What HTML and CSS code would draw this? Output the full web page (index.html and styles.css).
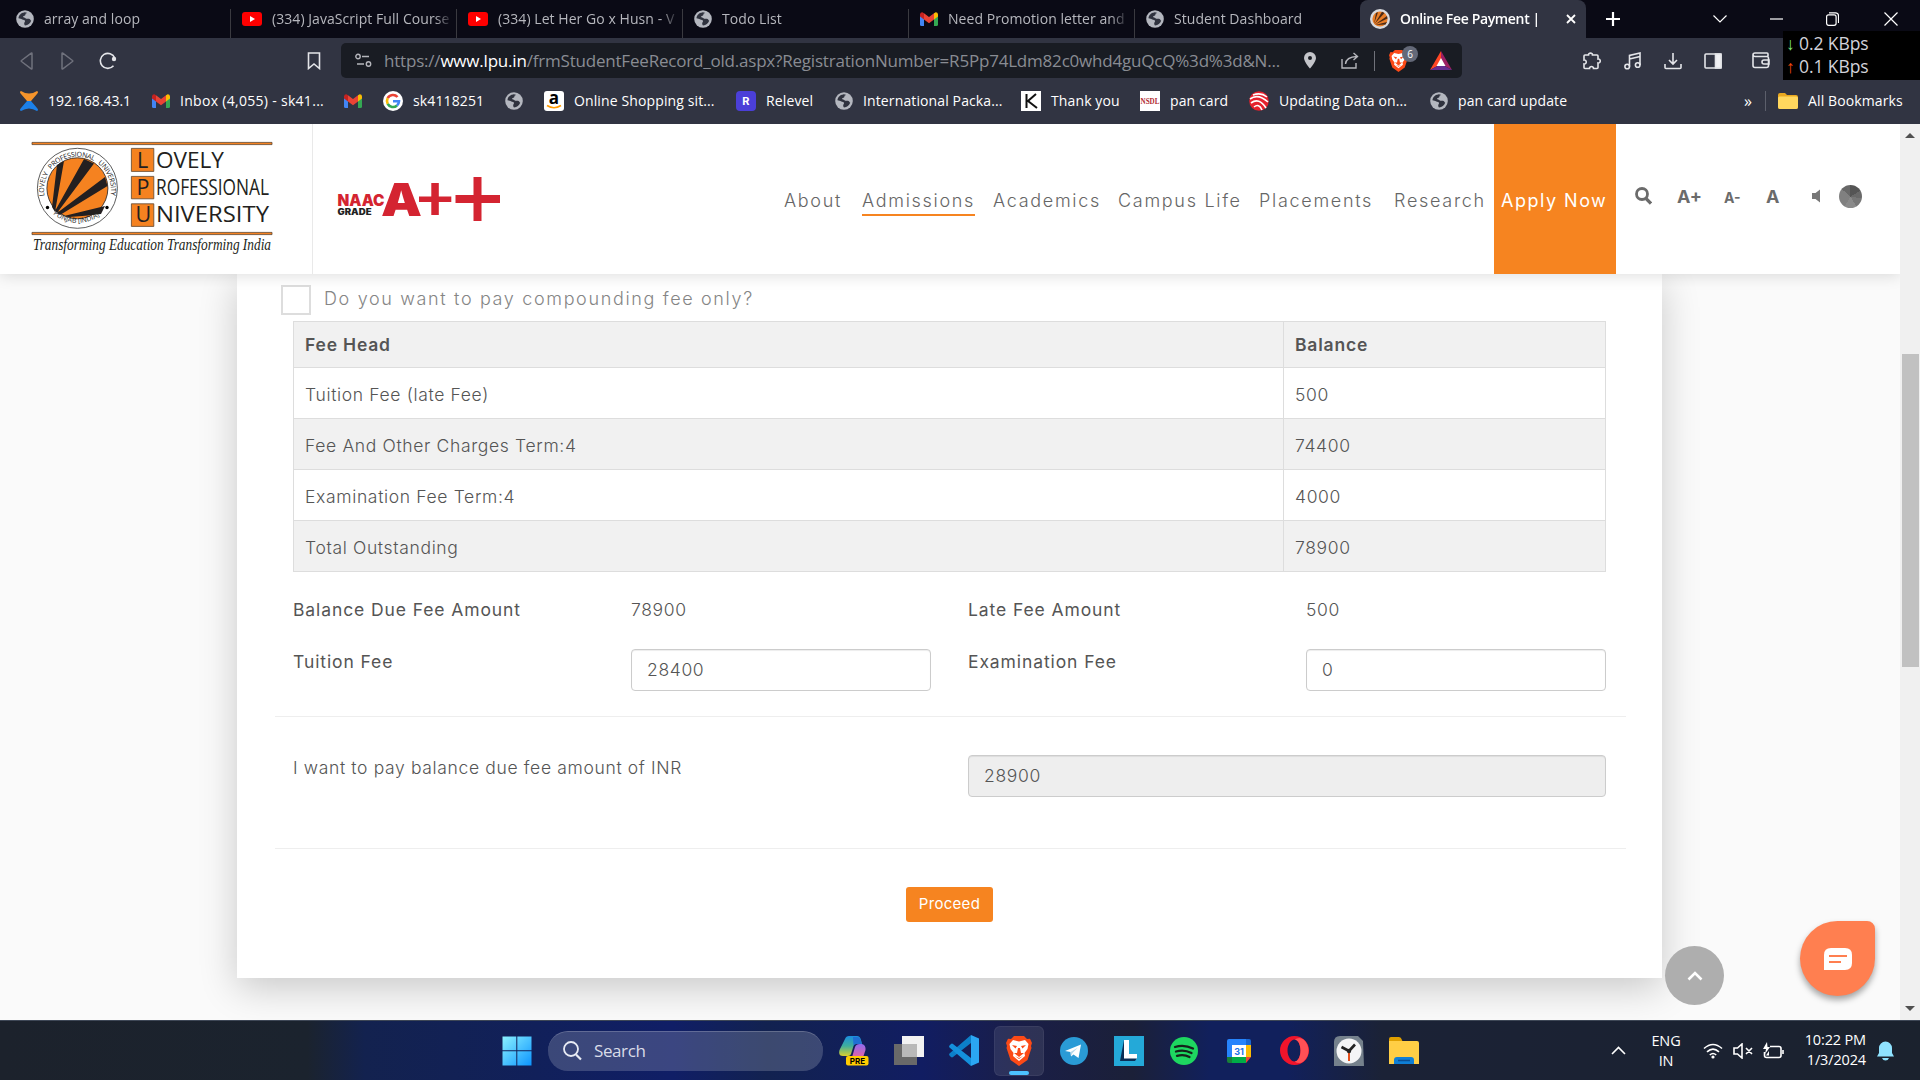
FILE: index.html
```html
<!DOCTYPE html>
<html lang="en">
<head>
<meta charset="utf-8">
<title>Online Fee Payment</title>
<link rel="stylesheet" href="styles.css">
</head>
<body>
<svg class="defs" aria-hidden="true">
  <symbol id="globe" viewBox="0 0 18 18"><circle cx="9" cy="9" r="8.8" fill="#b4b7bf"/><path d="M8.2 2.4C5 2.6 2.6 5.300 2.500 8.300c1.300.5 2.600.4 3.800 1.200 1 .7 2.400.2 2.700 1.200.3 1.200-1 1.600-.8 3 .1.700.3 1.200.8 1.700 3-.2 5.300-2 6.200-4.600-.8-.8-1.100-2-2.400-2.100-1.300-.1-2.300.4-3.300-.5-.8-.8-2.200-.4-2.400-1.400-.1-.9 1.200-.8 1.900-1.300.7-.6.2-1.400.8-2 .4-.4 1-.4 1.400-.6-.8-.4-2-.6-3-.5z" fill="#30333f"/></symbol>
  <symbol id="youtube" viewBox="0 0 20 14"><rect width="20" height="14" rx="3" fill="#f00"/><path d="M8 4v6l5-3z" fill="#fff"/></symbol>
  <symbol id="gmail" viewBox="0 0 18 14"><path d="M0 2v10.500Q0 14 1.500 14H4V5z" fill="#4285f4"/><path d="M18 2v10.500q0 1.500-1.500 1.500H14V5z" fill="#34a853"/><path d="M0 2.200Q.3.200 2.300.300L4 1.200V7.500L0 4.500z" fill="#c5221f"/><path d="M18 2.200Q17.700.2 15.700.3L14 1.200V7.500l4-3z" fill="#fbbc04"/><path d="M4 1.200l5 3.900 5-3.900v6.300l-5 3.800-5-3.800z" fill="#ea4335"/></symbol>
  <symbol id="brave" viewBox="0 0 26 30"><path d="M8 0h10l3 3 3-.2 2 4.200-1 3 .5 2-4 12L13 30 4.500 24l-4-12L1 10 0 7l2-4.200L5 3z" fill="#fb4a17"/><path d="M7 4l6 1.500L19 4l3.500 4-1 5-3 4 .5 3-6 5-6-5 .5-3-3-4-1-5z" fill="#fff"/><path d="M6 9l5 1-1.500 2.500zM20 9l-5 1 1.500 2.500zM12 12h2l1 5h3l-5 4-5-4h3zM9 20l4 2 4-2-4 3z" fill="#fb4a17"/></symbol>
  <symbol id="lpu" viewBox="0 0 20 20"><circle cx="10" cy="10" r="10" fill="#d8dade"/><circle cx="10" cy="10" r="7.600" fill="#e87d27"/><path d="M4 15L6 4l2-.8zM4.500 15L12 2.800l2.500 1.200zM5 15.500L17 7l.5 2.500zM5 16l12-3-1.500 2.500z" fill="#4a2a16"/></symbol>
</svg>

<div class="tabs">
  <div class="tab"><svg class="i18"><use href="#globe"/></svg><span>array and loop</span></div>
  <div class="tab"><svg class="yt"><use href="#youtube"/></svg><span>(334) JavaScript Full Course</span></div>
  <div class="tab"><svg class="yt"><use href="#youtube"/></svg><span>(334) Let Her Go x Husn - V</span></div>
  <div class="tab"><svg class="i18"><use href="#globe"/></svg><span>Todo List</span></div>
  <div class="tab"><svg class="gm"><use href="#gmail"/></svg><span>Need Promotion letter and</span></div>
  <div class="tab last"><svg class="i18"><use href="#globe"/></svg><span>Student Dashboard</span></div>
  <div class="tab active"><svg class="i20"><use href="#lpu"/></svg><span>Online Fee Payment |</span><svg class="close" viewBox="0 0 10 10"><path d="M1 1l8 8M9 1L1 9"/></svg></div>
  <div class="window-buttons">
    <svg width="14" height="14" viewBox="0 0 14 14" class="thick"><path d="M7 0v14M0 7h14"/></svg>
    <svg width="14" height="8" viewBox="0 0 14 8"><path d="M.5.5L7 7 13.500.5"/></svg>
    <svg width="13" height="14" viewBox="0 0 13 14"><path d="M0 7h13"/></svg>
    <svg width="13" height="14" viewBox="0 0 13 14"><rect x=".6" y="2.800" width="9.500" height="10.500" rx="2"/><path d="M3 .8h6.500q3 0 3 3V11"/></svg>
    <svg width="14" height="14" viewBox="0 0 14 14"><path d="M.5.500l13 13M13.500.5l-13 13"/></svg>
  </div>
</div>

<div class="toolbar">
  <svg class="dim" width="14" height="18" viewBox="0 0 14 18"><path d="M12 1.500v15q0 .8-.8.3L1.500 9.500q-.7-.5 0-1L11.200 1.200q.8-.5.800.3z"/></svg>
  <svg class="dim" width="14" height="18" viewBox="0 0 14 18"><path d="M2 1.500v15q0 .8.800.3l9.700-7.300q.7-.5 0-1L2.800 1.200q-.8-.5-.8.3z"/></svg>
  <svg width="18" height="18" viewBox="0 0 18 18"><path d="M14.500 13.800A7.500 7.500 0 1 1 15.800 6"/><circle cx="15" cy="7" r="2.200" fill="#e4e5e9" stroke="none"/></svg>
  <svg width="14" height="18" viewBox="0 0 14 18"><path d="M1.500 1h11v15.500L7 12l-5.500 4.500z"/></svg>
  <div class="address">
    <svg width="17" height="15" viewBox="0 0 17 15"><circle cx="3" cy="3.500" r="2.200"/><path d="M7 3.500h7M2 11h7"/><circle cx="13.500" cy="11" r="2.200"/></svg>
    <span class="url">https://<b>www.lpu.in</b>/frmStudentFeeRecord_old.aspx?RegistrationNumber=R5Pp74Ldm82c0whd4guQcQ%3d%3d&amp;N...</span>
    <svg width="12" height="17" viewBox="0 0 12 17"><path d="M6 0a6 6 0 0 1 6 6c0 4-6 10.500-6 10.500S0 10 0 6a6 6 0 0 1 6-6zm0 4a2 2 0 1 0 0 4 2 2 0 0 0 0-4z" fill="#c4c5ca" stroke="none"/></svg>
    <svg width="18" height="17" viewBox="0 0 18 17"><path d="M1 7v9h14v-5M4.500 12Q5 5 16 4.500M12.500 1l4 3.500-4 3.500"/></svg>
    <i class="rule"></i>
    <span class="shield"><svg width="19" height="22"><use href="#brave"/></svg><em>6</em></span>
    <svg width="22" height="19" viewBox="0 0 22 19" class="plain"><path d="M11 0L0 19l11-6z" fill="#ff4724"/><path d="M11 0l11 19-11-6z" fill="#9e1f63"/><path d="M0 19h22l-11-6z" fill="#662d91"/><path d="M11 7l4.500 8h-9z" fill="#fff"/></svg>
  </div>
  <svg class="ext" width="18" height="18" viewBox="0 0 18 18"><path d="M2 3h3.500C5.200.5 9.800.5 9.500 3H14q1 0 1 1v3c3-.4 3 4.400 0 4v4.500q0 1-1 1h-3.500c.3-2.600-4.300-2.600-4 0H2q-1 0-1-1V12c3 .3 3-4.300 0-4V4q0-1 1-1z"/></svg>
  <svg width="18" height="18" viewBox="0 0 18 18"><circle cx="3.200" cy="14.500" r="2.300"/><circle cx="13.700" cy="13" r="2.300"/><path d="M5.500 14.500V3.500L16 1v12M5.500 7L16 4.500"/></svg>
  <svg width="18" height="18" viewBox="0 0 18 18"><path d="M9 1v11M5 8l4 4 4-4M1 12v3.500q0 1 1 1h14q1 0 1-1V12"/></svg>
  <svg width="18" height="16" viewBox="0 0 18 16"><rect x="1" y="1" width="16" height="14" rx="1"/><path d="M11.500 1H17v14h-5.500z" fill="#f1f1f4"/></svg>
  <svg class="wallet" width="18" height="17" viewBox="0 0 18 17"><path d="M16 4V2q0-1-1-1H3Q1 1 1 3v10.500q0 2 2 2h11.500q2 0 2-2V6q0-1.500-1.500-1.500H3Q1.500 4.500 1 3M17 8h-5q-2 0-2 2t2 2h5z"/></svg>
</div>
<div class="net"><span><i class="down">↓</i> 0.2 KBps</span><span><i class="up">↑</i> 0.1 KBps</span></div>

<div class="bookmarks">
  <div><svg width="18" height="20" viewBox="0 0 18 20"><path d="M1 0q8 5 16 0 2 1 0 3l-6 7H7L1 3q-2-2 0-3z" fill="#f5942b"/><path d="M1 20q8-5 16 0 2-1 0-3l-6-7H7l-6 7q-2 2 0 3z" fill="#1c80e8"/></svg>192.168.43.1</div>
  <div><svg class="gm"><use href="#gmail"/></svg>Inbox (4,055) - sk41...</div>
  <div><svg class="gm"><use href="#gmail"/></svg></div>
  <div><svg width="20" height="20" viewBox="0 0 20 20"><circle cx="10" cy="10" r="10" fill="#fff"/><g fill="none" stroke-width="2.600"><path d="M14.500 6A6 6 0 0 0 4.700 7.200" stroke="#ea4335"/><path d="M4.700 7.200a6 6 0 0 0 0 5.600" stroke="#fbbc05"/><path d="M4.700 12.800a6 6 0 0 0 9.300 1.700" stroke="#34a853"/><path d="M14 14.500a6 6 0 0 0 2-4.300h-6" stroke="#4285f4"/></g></svg>sk4118251</div>
  <div><svg class="i18"><use href="#globe"/></svg></div>
  <div><svg width="20" height="20" viewBox="0 0 20 20"><rect width="20" height="20" rx="3" fill="#fff"/><text x="10" y="13" text-anchor="middle" class="amazon">a</text><path d="M3 14.500q7 4.500 14 0" fill="none" stroke="#f90" stroke-width="1.600"/></svg>Online Shopping sit...</div>
  <div><svg width="20" height="20" viewBox="0 0 20 20"><rect width="20" height="20" rx="4" fill="#4b3fd8"/><text x="10" y="14" text-anchor="middle" class="letter">R</text></svg>Relevel</div>
  <div><svg class="i18"><use href="#globe"/></svg>International Packa...</div>
  <div><svg width="20" height="20" viewBox="0 0 20 20"><path d="M0 0h20v20H0z" fill="#fff"/><path d="M5.500 3v14M15 3l-8 7 9 7" fill="none" stroke="#111" stroke-width="2"/></svg>Thank you</div>
  <div><svg width="20" height="20" viewBox="0 0 20 20"><path d="M0 0h20v20H0z" fill="#fff"/><text x=".5" y="13" textLength="19" lengthAdjust="spacingAndGlyphs" class="nsdl">NSDL</text></svg>pan card</div>
  <div><svg width="20" height="20" viewBox="0 0 20 20"><circle cx="10" cy="10" r="9.800" fill="#e5212d"/><path d="M1 8q8-6 18 3M2 12q8-6 15 5M5 16q5-4 8 3M4 4q8-3 14 2" fill="none" stroke="#fff" stroke-width="1.600"/></svg>Updating Data on...</div>
  <div><svg class="i18"><use href="#globe"/></svg>pan card update</div>
  <div class="more">»</div>
  <div class="all"><svg width="20" height="16" viewBox="0 0 20 16"><path d="M0 2q0-2 2-2h5l2 2h9q2 0 2 2v10q0 2-2 2H2q-2 0-2-2z" fill="#e9a820"/><path d="M0 5q0-1.500 1.500-1.500h17Q20 3.500 20 5v9q0 2-2 2H2q-2 0-2-2z" fill="#ffd75e"/></svg>All Bookmarks</div>
</div>

<div class="viewport">
  <div class="page">
    <header class="site-header">
      <div class="brand">
        <svg width="242" height="120" viewBox="31 138 242 120">
          <g fill="#f58220" stroke="#5e452e" stroke-width=".8"><path d="M32 142.400h240v2.200H32zM32 232.400h240v2.200H32z"/><path d="M131.400 148.400h22.400v23h-22.400zM131.400 176.400h22.400v22.400h-22.400zM131.400 203.800h22.400v22.600h-22.400z"/></g>
          <circle cx="77.400" cy="188.300" r="40" fill="#fff" stroke="#333" stroke-width=".8"/>
          <circle cx="77.400" cy="188.300" r="30.500" fill="#f58220" stroke="#231f20" stroke-width=".8"/>
          <path d="M52 207L57 165l7-4L55 212zM55 211L84 159l10 4.500L57 213zM57 213l48-36 2.500 9L60 215zM64 216l41-10-4 8q-15 2-32 3z" fill="#231f20"/>
          <circle cx="47.500" cy="207.500" r="1.700"/><circle cx="107" cy="207.500" r="1.700"/>
          <path id="ring-top" d="M44.500 196A33.500 33.500 0 1 1 110.500 196" fill="none"/>
          <path id="ring-bottom" d="M53 214A38 38 0 0 0 103 213" fill="none"/>
          <text class="ring"><textPath href="#ring-top" textLength="116">LOVELY &#160; PROFESSIONAL &#160; UNIVERSITY</textPath></text>
          <text class="ring"><textPath href="#ring-bottom" textLength="50">PUNJAB [INDIA]</textPath></text>
          <g class="wordmark"><text x="137" y="167.500">L</text><text x="136.500" y="195">P</text><text x="135.500" y="222">U</text>
          <text x="156" y="167.500" textLength="68" lengthAdjust="spacingAndGlyphs">OVELY</text>
          <text x="156" y="195" textLength="113" lengthAdjust="spacingAndGlyphs">ROFESSIONAL</text>
          <text x="156" y="222" textLength="113" lengthAdjust="spacingAndGlyphs">NIVERSITY</text></g>
          <text class="tagline" x="33" y="250" textLength="238" lengthAdjust="spacingAndGlyphs">Transforming Education Transforming India</text>
        </svg>
      </div>
      <svg class="naac" width="164" height="50" viewBox="337 174 164 50">
        <text x="337.500" y="206" textLength="47" lengthAdjust="spacingAndGlyphs" class="naac-word">NAAC</text>
        <text x="337.500" y="214.800" textLength="34" lengthAdjust="spacingAndGlyphs" class="naac-grade">GRADE</text>
        <text x="381" y="216" textLength="41" lengthAdjust="spacingAndGlyphs" class="naac-a">A</text>
        <path d="M419 196.500h12.300V183h7.500v13.500h12.500v5.500h-12.500v13h-7.500v-13H419zM455.500 195h18v-18h8v18H500v8h-18.500v18h-8v-18h-18z" fill="#d42431"/>
      </svg>
      <nav>
        <a>About</a><a class="current">Admissions</a><a>Academics</a><a>Campus Life</a><a>Placements</a><a>Research</a><a class="apply">Apply Now</a>
      </nav>
      <div class="tools">
        <svg width="17" height="18" viewBox="0 0 17 18"><circle cx="7" cy="7" r="5.500" fill="none" stroke="#6b6b6b" stroke-width="2.800"/><path d="M11 11.500l5 5" stroke="#6b6b6b" stroke-width="3.200"/></svg>
        <b>A+</b><b class="small">A-</b><b>A</b>
        <svg width="9" height="14" viewBox="0 0 9 14"><path d="M0 4h3.500L8 .5v13L3.500 10H0z" fill="#777"/></svg>
        <i class="contrast"></i>
      </div>
    </header>
    <main>
      <section class="card">
        <label class="check"><i></i><span>Do you want to pay compounding fee only?</span></label>
        <table>
          <tr><th>Fee Head</th><th>Balance</th></tr>
          <tr><td>Tuition Fee (late Fee)</td><td>500</td></tr>
          <tr><td>Fee And Other Charges Term:4</td><td>74400</td></tr>
          <tr><td>Examination Fee Term:4</td><td>4000</td></tr>
          <tr><td>Total Outstanding</td><td>78900</td></tr>
        </table>
        <div class="grid">
          <span class="strong">Balance Due Fee Amount</span><span>78900</span><span class="strong">Late Fee Amount</span><span>500</span>
          <span class="strong">Tuition Fee</span><div class="field">28400</div><span class="strong">Examination Fee</span><div class="field">0</div>
        </div>
        <hr>
        <div class="pay"><span>I want to pay balance due fee amount of INR</span><div class="field readonly">28900</div></div>
        <hr>
        <div class="actions"><button>Proceed</button></div>
      </section>
    </main>
    <div class="to-top"><svg width="16" height="10" viewBox="0 0 16 10"><path d="M1.500 8.500L8 2l6.500 6.500" fill="none" stroke="#fff" stroke-width="2.600"/></svg></div>
    <div class="chat"><svg width="28" height="22" viewBox="0 0 28 22"><path d="M7 0h14q7 0 7 7v8q0 7-7 7H0V7q0-7 7-7z" fill="#fff"/><path d="M5 8h18M5 14h12" stroke="#ff7f50" stroke-width="2"/></svg></div>
  </div>
  <div class="scrollbar"><i class="arrow-up"></i><i class="thumb"></i><i class="arrow-down"></i></div>
</div>

<footer class="taskbar">
  <svg class="start" width="30" height="30" viewBox="0 0 30 30"><defs><linearGradient id="win" x1="0" y1="0" x2="30" y2="30" gradientUnits="userSpaceOnUse"><stop stop-color="#8df3ff"/><stop offset="1" stop-color="#0a93ff"/></linearGradient></defs><path d="M.5.500h13.800v13.800H.5zM15.300.5h14.200v13.800H15.300zM.5 15.300h13.800v14.200H.5zM15.300 15.300h14.200v14.200H15.300z" fill="url(#win)"/></svg>
  <div class="search"><svg width="19" height="20" viewBox="0 0 19 20"><circle cx="8" cy="8" r="7" fill="none" stroke="#e8ebf4" stroke-width="1.800"/><path d="M13 13.500l5 5" stroke="#e8ebf4" stroke-width="2.200"/></svg><span>Search</span></div>
  <div class="apps">
    <span><svg width="30" height="30" viewBox="0 0 30 30"><defs><linearGradient id="cp-left" x1="0" y1="0" x2="0" y2="1"><stop stop-color="#1b8ee0"/><stop offset=".5" stop-color="#3fae9c"/><stop offset="1" stop-color="#d9cf2f"/></linearGradient><linearGradient id="cp-right" x1="0" y1="0" x2="0" y2="1"><stop stop-color="#8d6bf0"/><stop offset="1" stop-color="#f0609a"/></linearGradient></defs><path d="M6 3q1-3 4-3h8q3 0 4 4l1 4h-6q-2 0-2.500 2L12 18q-.6 2-3 2H4q-5 0-3.500-6z" fill="url(#cp-left)"/><path d="M14 1h4q3 0 4 4l1 3h-6q-2 0-2.500 2z" fill="#1f6fd4"/><path d="M21 8h2q4 1 3.500 6l-2 6q-1 3-4 3h-8l3.500-12q1-3 5-3z" fill="url(#cp-right)"/><rect x="7" y="20" width="22.500" height="9.500" rx="2" fill="#fc0"/><text x="18.500" y="28" text-anchor="middle" class="pre">PRE</text></svg></span>
    <span><svg width="30" height="30" viewBox="0 0 30 30"><path d="M0 8h23v21H0z" fill="#696969"/><path d="M8 0h22v21H8z" fill="#f2f2f2"/><path d="M8 8h15v13H8z" fill="#b9b9b9"/></svg></span>
    <span><svg width="30" height="31" viewBox="0 0 30 31"><path d="M22 0v8L4 22q-1 .8-2 0l-1.500-1.500q-.8-1 0-2z" fill="#0c7fc9"/><path d="M22 31v-8L4 9Q3 8.200 2 9L.5 10.500q-.8 1 0 2z" fill="#1490dc"/><path d="M22 0l8 3.500v24L22 31z" fill="#2ba6f3"/></svg></span>
    <span class="running"><svg width="26" height="30"><use href="#brave"/></svg></span>
    <span><svg width="28" height="28" viewBox="0 0 28 28"><circle cx="14" cy="14" r="14" fill="#2a9bd6"/><path d="M5 14L21 7.500l-2.500 13.500-5-3.500-2.500 2-.5-4.500z" fill="#fff"/><path d="M10.500 15L18 10.500 12.500 16l-1.500 3z" fill="#b9d9ea"/></svg></span>
    <span><svg width="30" height="30" viewBox="0 0 30 30"><path d="M0 0h30v30H0z" fill="#24a9d8"/><path d="M10 4L6 25h15l2-3H10z" fill="#0a2f56"/><path d="M10 4h5v14h8v4.500H10z" fill="#fff"/></svg></span>
    <span><svg width="28" height="28" viewBox="0 0 28 28"><circle cx="14" cy="14" r="14" fill="#1ed760"/><path d="M5 10q9-3 18 1.500M6 14.500q8-2.500 15.500 1.500M7 18.800q7-2 12.500 1.200" fill="none" stroke="#15231b" stroke-width="2.300" stroke-linecap="round"/></svg></span>
    <span><svg width="24" height="24" viewBox="0 0 24 24"><path d="M2 0h17v6H5v13H0V2q0-2 2-2z" fill="#2684fc"/><path d="M19 0h3q2 0 2 2v4h-5z" fill="#1967d2"/><path d="M5 6h14v13H5z" fill="#fff"/><path d="M19 6h5v12h-5z" fill="#fbbc04"/><path d="M5 18h14v6H5z" fill="#00ac47"/><path d="M0 18h5v6H2q-2 0-2-2z" fill="#188038"/><path d="M19 18h5l-5 6z" fill="#ea4335"/><text x="12" y="16" text-anchor="middle" class="day">31</text></svg></span>
    <span><svg width="29" height="29" viewBox="0 0 29 29"><path d="M14.500 0a14.500 14.500 0 1 0 0 29 14.500 14.500 0 0 0 0-29zm0 3.500c3.500 0 6 5 6 11s-2.500 11-6 11-7-5-7-11 3.500-11 7-11z" fill="#f0142b" fill-rule="evenodd"/><path d="M14.500 3.500q5-3 9 0a14.500 14.500 0 0 1 0 22q-4 3-9 0c3.500 0 6-5 6-11s-2.500-11-6-11z" fill="#ff5055"/></svg></span>
    <span><svg width="30" height="30" viewBox="0 0 30 30"><path d="M6 0h18l5 5 1 25H0V6q0-6 6-6z" fill="#75818c"/><circle cx="15" cy="15" r="12.500" fill="#f4f5f6"/><path d="M15 15L7.500 11M15 15l6-6.500" stroke="#222" stroke-width="2.600"/><path d="M15 15v10" stroke="#e4501c" stroke-width="2"/><circle cx="15" cy="15" r="2.200" fill="#222"/></svg></span>
    <span><svg width="30" height="27" viewBox="0 0 30 27"><path d="M0 2q0-2 2-2h8q2 0 3 3l1 3H0z" fill="#e0a000"/><path d="M0 4h28q2 0 2 2v21H0z" fill="#ffce45"/><path d="M5 27v-4q0-3 3-3h14q3 0 3 3v4z" fill="#0f7fd6"/><path d="M9 23.500h12" stroke="#0a4f94" stroke-width="1.500"/></svg></span>
  </div>
  <div class="tray">
    <svg width="15" height="9" viewBox="0 0 15 9"><path d="M1 8l6.500-6.500L14 8"/></svg>
    <div class="lang">ENG<br>IN</div>
    <svg width="20" height="16" viewBox="0 0 20 16"><path d="M1 5.500q9-8 18 0M4 8.800q6-5.500 12 0M6.800 12q3.200-3 6.400 0"/><circle cx="10" cy="14" r="1.600" fill="#fff" stroke="none"/></svg>
    <svg width="20" height="16" viewBox="0 0 20 16"><path d="M1 5v6h3.500L9 15V1L4.500 5zM13 5l6 6M19 5l-6 6"/></svg>
    <svg width="21" height="18" viewBox="0 0 21 18"><path d="M7 4.500h9q2 0 2 2v7q0 2-2 2H3.500q-2 0-2-2V10M20 8v4"/><path d="M4 0L0 7h3l-1 5 5-7H4.500z" fill="#fff" stroke="none"/><path d="M3 13.500h3V9z" fill="#fff" stroke="none"/></svg>
    <div class="clock">10:22 PM<br>1/3/2024</div>
    <svg width="17" height="20" viewBox="0 0 17 20"><path d="M0 15.500l2-3.500V7a6.500 6.500 0 0 1 13 0v5l2 3.500zM5 17h7q-1 2.500-3.500 2.500T5 17z" fill="#8fe3ff" stroke="none"/></svg>
  </div>
</footer>
</body>
</html>
```
FILE: styles.css
```css
* { box-sizing: border-box; }
body { margin: 0; width: 1920px; height: 1080px; overflow: hidden; position: relative; display: flex; flex-direction: column; font-family: "Open Sans", "Noto Sans", sans-serif; }
svg { display: block; flex: none; }
.defs { position: absolute; width: 0; height: 0; }
i, em { font-style: normal; }
.i18 { width: 18px; height: 18px; }
.i20 { width: 20px; height: 20px; }
.yt { width: 20px; height: 14px; }
.gm { width: 18px; height: 14px; }

/* Browser tabs */
.tabs { height: 38px; flex: none; background: #0a0a15; display: flex; padding-left: 5px; color: #b6b7bd; font-size: 14px; letter-spacing: .06px; }
.tab { width: 226px; height: 38px; flex: none; display: flex; align-items: center; padding-left: 11px; position: relative; }
.tab span { margin: -2px 0 0 10px; width: 181px; white-space: nowrap; overflow: hidden; -webkit-mask-image: linear-gradient(90deg, #000 90%, transparent); mask-image: linear-gradient(90deg, #000 90%, transparent); }
.tab::after { content: ""; position: absolute; right: 0; top: 9px; width: 1px; height: 29px; background: #3a3a40; }
.tab.last::after, .tab.active::after { display: none; }
.tab.active { background: #313442; color: #fff; font-weight: 600; border-radius: 8px 8px 0 0; margin-left: -1px; padding-left: 10px; }
.tab.active span { width: 152px; letter-spacing: -.35px; }
.close { width: 10px; height: 10px; margin-left: 14px; fill: none; stroke: #fff; stroke-width: 1.800; }
.window-buttons { display: grid; grid-template-columns: 107px 57px 56px 58px 20px; align-items: center; padding-left: 20px; }
.window-buttons svg { fill: none; stroke: #fff; stroke-width: 1.200; }
.window-buttons .thick { stroke-width: 2.200; }

/* Toolbar */
.toolbar { height: 45px; flex: none; background: #313442; display: grid; grid-template-columns: 40px 39px 208px 34px 1242px 41px 40px 40px 48px 20px; align-items: center; padding-left: 20px; }
.toolbar svg { fill: none; stroke: #e4e5e9; stroke-width: 1.600; }
.toolbar .dim { stroke: #6f717c; stroke-width: 1.500; }
.toolbar .plain { stroke: none; }
.address { width: 1121px; height: 35px; background: #191c23; border-radius: 5px; display: grid; grid-template-columns: 29px 920px 37px 33px 15px 41px 22px; align-items: center; padding-left: 14px; }
.address svg { stroke: #b5b6bc; stroke-width: 1.400; }
.url { font-size: 17px; letter-spacing: -.2px; color: #898c93; white-space: nowrap; }
.url b { color: #fff; font-weight: 400; }
.rule { width: 1px; height: 20px; background: #70727a; }
.shield { position: relative; }
.shield svg { stroke: none; }
.shield em { position: absolute; left: 13px; top: -4px; width: 16px; height: 16px; border-radius: 8px; background: #646978; color: #fff; font-size: 10px; line-height: 16px; text-align: center; }
.net { position: absolute; left: 1783px; top: 31px; width: 137px; height: 49px; background: #000; color: #d2d2da; font-size: 17.500px; letter-spacing: -.1px; line-height: 23px; padding: 1px 3px; display: flex; flex-direction: column; white-space: nowrap; }
.down { color: #83e77a; }
.up { color: #f5480c; }

/* Bookmarks bar */
.bookmarks { height: 41px; flex: none; background: #313442; display: grid; grid-template-columns: 132px 192px 39px 122px 39px 192px 99px 186px 119px 109px 181px 314px 21px 150px; align-items: center; padding: 0 0 5px 20px; color: #fff; font-size: 14px; line-height: 20px; letter-spacing: .12px; white-space: nowrap; }
.bookmarks > div { display: flex; align-items: center; gap: 10px; }
.bookmarks > div:nth-child(2) { letter-spacing: .3px; }
.bookmarks > div:first-child { letter-spacing: 0; }
.bookmarks .all { border-left: 1px solid #5c5f6b; padding-left: 12px; height: 20px; }
.more { font-size: 16px; }
.amazon { font: bold 17px "Open Sans", sans-serif; }
.letter { font: bold 11px Inter, sans-serif; fill: #fff; }
.nsdl { font: bold 9px "Liberation Serif", serif; fill: #b12a34; letter-spacing: 0; }

/* Web page */
.viewport { height: 896px; flex: none; display: flex; font-family: Inter, sans-serif; color: #555; background: #fafafa; }
.page { width: 1900px; position: relative; overflow: hidden; }
.site-header { height: 150px; background: #fff; display: flex; position: relative; z-index: 2; box-shadow: 0 2px 14px rgba(0,0,0,.13); }
.brand { width: 313px; border-right: 1px solid #e9e9e9; padding: 14px 0 0 31px; }
.naac { margin: 50px 283px 0 24px; }
.ring { font: 7px "Open Sans", sans-serif; fill: #222; }
.wordmark { font: 21.500px "Open Sans", sans-serif; fill: #231f20; }
.tagline { font: italic 16px "Liberation Serif", serif; fill: #231f20; }
.naac-word { font: 900 15.500px Inter, sans-serif; fill: #d42431; }
.naac-grade { font: 900 8.500px Inter, sans-serif; fill: #222; }
.naac-a { font: 900 46px Inter, sans-serif; fill: #d42431; }
nav { display: grid; grid-template-columns: 78px 131px 125px 141px 135px 100px 122px; font-size: 18px; font-weight: 300; letter-spacing: 1.700px; color: #666; }
nav a { white-space: nowrap; justify-self: start; height: 30px; margin-top: 62px; line-height: 29px; }
nav .current { border-bottom: 2px solid #f68420; }
nav .apply { background: #f68420; color: #fff; font-weight: 400; width: 122px; height: 150px; margin: 0; line-height: 153px; padding-left: 7px; letter-spacing: 1.500px; }
.tools { display: grid; grid-template-columns: 42px 47px 42px 46px 27px 23px; align-items: center; align-self: flex-start; margin: 59px 0 0 19px; height: 26px; color: #6b6b6b; font-size: 18px; }
.tools .small { font-size: 14px; padding-top: 3px; }
.contrast { width: 23px; height: 23px; border-radius: 50%; background: conic-gradient(#555 0 60deg, #696969 60deg 100deg, #777 100deg 150deg, #8a8a8a 150deg 210deg, #808080 210deg 310deg, #686868 310deg); }

.card { width: 1425px; height: 704px; margin-left: 237px; background: #fff; box-shadow: 0 10px 36px rgba(0,0,0,.2); padding: 11px 36px 0 38px; font-size: 17.500px; font-weight: 300; letter-spacing: .65px; }
.check { display: flex; height: 30px; padding-left: 6px; font-size: 18px; letter-spacing: 1.650px; color: #858585; line-height: 28px; }
.check i { width: 30px; height: 30px; border: 2px solid #ddd; margin-right: 13px; }
table { border-collapse: collapse; width: 1313px; table-layout: fixed; margin: 6px 0 0 18px; }
th, td { border: 1px solid #ddd; text-align: left; height: 51px; padding: 2px 11px 0; }
th { height: 46px; letter-spacing: .8px; font-weight: 600; padding-top: 0; }
th:first-child { width: 990px; }
tr:nth-child(odd) { background: #f1f1f1; }
.grid { display: grid; grid-template-columns: 338px 337px 338px 300px; grid-template-rows: 50px 67px; padding: 27px 0 0 18px; line-height: 22px; }
.strong { font-weight: 400; letter-spacing: .9px; }
.field { width: 300px; height: 42px; border: 1px solid #ccc; border-radius: 4px; padding: 0 15px; line-height: 40px; box-shadow: inset 0 1px 1px rgba(0,0,0,.075); }
.grid .strong:nth-child(5), .grid .strong:nth-child(7) { padding-top: 2px; }
.card hr { border: 0; border-top: 1px solid #eee; margin: 0; height: 1px; }
.pay { height: 131px; display: flex; padding: 38px 0 0 18px; }
.pay span { width: 675px; line-height: 26px; }
.readonly { width: 638px; background: #eee; }
.actions { display: flex; justify-content: center; padding: 38px 2px 0 0; }
.actions button { width: 87px; height: 35px; border: 0; border-radius: 3px; background: #f68420; color: #fff; font: 15px Inter, sans-serif; letter-spacing: .3px; padding: 0 0 2px; }
.to-top { position: absolute; left: 1665px; top: 822px; width: 59px; height: 59px; border-radius: 50%; background: #aeaeae; display: flex; align-items: center; justify-content: center; }
.chat { position: absolute; left: 1800px; top: 797px; width: 75px; height: 75px; border-radius: 38px 8px 38px 38px; background: #ff7f50; box-shadow: 0 4px 6px rgba(0,0,0,.35); display: flex; align-items: center; justify-content: center; }
.scrollbar { width: 20px; background: #f0f0f0; display: flex; flex-direction: column; align-items: center; }
.arrow-up { margin: 9px 0 216px; border: 5px solid transparent; border-top: 0; border-bottom-color: #505050; }
.thumb { width: 17px; height: 313px; background: #c1c1c1; }
.arrow-down { margin-top: 339px; border: 5px solid transparent; border-bottom: 0; border-top-color: #505050; }

/* Taskbar */
.taskbar { height: 60px; flex: none; border-top: 1px solid #3e4756; display: flex; align-items: center; padding-left: 502px; color: #fff; background: linear-gradient(90deg, #1c222c, #1b232e 16%, #13224f 19%, #11205a 28%, #101e66 35%, #122250 40%, #111d62 48%, #1a1e48 53%, #1b2038 59%, #11205c 63%, #11205c 67%, #1b2236 72%, #1b222e); }
.search { width: 275px; height: 40px; margin-left: 16px; border-radius: 20px; background: rgba(255,255,255,.18); border-top: 1px solid rgba(255,255,255,.2); display: flex; align-items: center; gap: 12px; padding-left: 15px; color: #d9dce8; font-size: 17px; letter-spacing: -.4px; }
.search span { margin-top: -2px; }
.apps { display: flex; gap: 5px; margin-left: 6px; }
.apps span { width: 50px; height: 50px; display: flex; align-items: center; justify-content: center; }
.apps .running { position: relative; background: rgba(255,255,255,.09); border-radius: 6px; border: 1px solid rgba(255,255,255,.06); }
.running::after { content: ""; position: absolute; bottom: 0; left: 14px; width: 20px; height: 4px; border-radius: 2px; background: #4cc2ff; }
.pre { font: bold 8px Inter, sans-serif; }
.day { font: bold 9px Inter, sans-serif; fill: #1a73e8; }
.tray { display: grid; grid-template-columns: 36px 56px 30px 30px 29px 85px 17px; align-items: center; margin-left: 182px; font-size: 14.500px; letter-spacing: -.15px; line-height: 20px; white-space: nowrap; }
.tray svg { fill: none; stroke: #fff; stroke-width: 1.600; }
.lang { text-align: center; width: 38px; }
.clock { text-align: right; width: 74px; margin-top: -2px; }
```
